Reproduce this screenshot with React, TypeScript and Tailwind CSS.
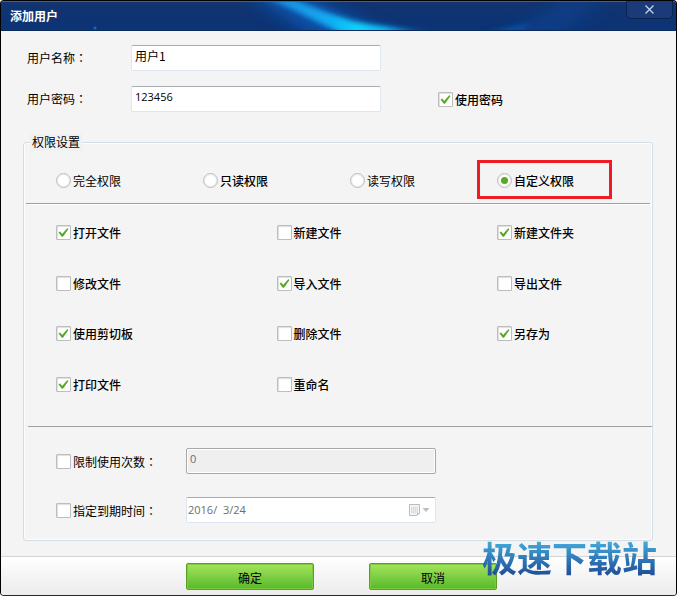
import { useState } from "react";
import type { ReactNode } from "react";

function Colon() {
  return <span className="font-['Noto_Sans_CJK_TC',sans-serif]">：</span>;
}

function CheckBox({
  label,
  checked = false,
  bold = true,
}: {
  label: ReactNode;
  checked?: boolean;
  bold?: boolean;
}) {
  return (
    <label className={"flex items-center gap-[2px] " + (bold ? "font-medium" : "")}>
      <span className="relative block size-[15px] shrink-0">
        <input
          type="checkbox"
          defaultChecked={checked}
          className="peer block size-[15px] appearance-none rounded-[1px] border border-[#bdbdbd] bg-white shadow-[inset_1px_1px_1px_#dedede]"
        />
        <svg
          viewBox="0 0 15 15"
          className="pointer-events-none absolute inset-0 hidden size-[15px] peer-checked:block"
        >
          <path
            d="M2.8 7.6 L4.2 6.8 L6.2 9.2 L11.2 3.4 L12.2 4 L7 11.4 L5.8 11.4 Z"
            fill="#52a51c"
            stroke="#52a51c"
            strokeWidth="0.4"
            strokeLinejoin="round"
          />
        </svg>
      </span>
      <span className="leading-[15px] whitespace-nowrap">{label}</span>
    </label>
  );
}

function RadioOption({
  label,
  value,
  current,
  onPick,
  bold = false,
  marked = false,
}: {
  label: string;
  value: string;
  current: string;
  onPick: (v: string) => void;
  bold?: boolean;
  marked?: boolean;
}) {
  return (
    <label className={"relative flex items-center gap-[2px] " + (bold ? "font-medium" : "")}>
      <span className="relative block size-[15px] shrink-0">
        <input
          type="radio"
          name="permission"
          value={value}
          checked={current === value}
          onChange={() => onPick(value)}
          className="peer block size-[15px] appearance-none rounded-full border border-[#bdbdbd] bg-white shadow-[inset_0_0_2px_#c8c8c8]"
        />
        <span className="pointer-events-none absolute inset-[4px] hidden rounded-full bg-[#56ab20] peer-checked:block" />
      </span>
      <span className="leading-[15px] whitespace-nowrap">{label}</span>
      {marked && (
        <span className="pointer-events-none absolute -top-[13px] -left-[20px] h-[39px] w-[135px] border-[3px] border-[#ee1c25]" />
      )}
    </label>
  );
}

function TitleBar() {
  return (
    <header className="relative flex h-[30px] items-center justify-between overflow-hidden border-b border-[#0a2a5c] bg-[#10316f]">
      <svg
        viewBox="0 0 675 30"
        preserveAspectRatio="none"
        className="absolute inset-0 size-full"
      >
        <defs>
          <linearGradient id="base" x1="0" y1="0" x2="0" y2="1">
            <stop offset="0" stopColor="#13346f" />
            <stop offset="1" stopColor="#0c3375" />
          </linearGradient>
          <linearGradient id="beam" gradientUnits="userSpaceOnUse" x1="268" y1="0" x2="430" y2="0">
            <stop offset="0" stopColor="#1488dc" />
            <stop offset="0.35" stopColor="#12a8f0" />
            <stop offset="0.55" stopColor="#0cd4fc" />
            <stop offset="0.72" stopColor="#0cb4f4" />
            <stop offset="1" stopColor="#0c5cc0" stopOpacity="0.1" />
          </linearGradient>
          <filter id="soft" filterUnits="userSpaceOnUse" x="0" y="-40" width="675" height="110">
            <feGaussianBlur stdDeviation="3" />
          </filter>
          <filter id="wide" filterUnits="userSpaceOnUse" x="0" y="-60" width="675" height="150">
            <feGaussianBlur stdDeviation="14 5" />
          </filter>
        </defs>
        <rect width="675" height="30" fill="url(#base)" />
        <path d="M240 -14 L290 -14 L410 44 L320 44 Z" fill="#0a58b8" opacity="0.8" filter="url(#wide)" />
        <path
          d="M250 -10 L276 -10 C300 2 328 13 352 21 C376 26 400 28 440 31 L440 36 L350 38 C320 24 296 10 250 -10 Z"
          fill="url(#beam)"
          filter="url(#soft)"
        />
        <path d="M480 34 L530 22 L520 34 Z" fill="#1060c4" opacity="0.6" filter="url(#soft)" />
        <path d="M500 40 L570 -6 L600 -6 L560 40 Z" fill="#0c4a9c" opacity="0.5" filter="url(#wide)" />
        <circle cx="94" cy="28" r="1.6" fill="#1863c8" />
        <rect width="675" height="1" fill="#4a6391" />
      </svg>
      <h1 className="relative pl-[9px] text-[12px] font-bold text-white">添加用户</h1>
      <button
        type="button"
        aria-label="关闭"
        className="relative mr-[3px] flex h-[18px] w-[47px] items-center justify-center self-start rounded-b-[5px] border border-t-0 border-[#0a2452] bg-[#1a3b78]"
      >
        <svg viewBox="0 0 9 9" className="size-[9px]" stroke="#c8d4e8" strokeWidth="1.3">
          <path d="M0.5 0.5 L8.5 8.5 M8.5 0.5 L0.5 8.5" />
        </svg>
      </button>
    </header>
  );
}

const options: { label: string; checked: boolean }[] = [
  { label: "打开文件", checked: true },
  { label: "新建文件", checked: false },
  { label: "新建文件夹", checked: true },
  { label: "修改文件", checked: false },
  { label: "导入文件", checked: true },
  { label: "导出文件", checked: false },
  { label: "使用剪切板", checked: true },
  { label: "删除文件", checked: false },
  { label: "另存为", checked: true },
  { label: "打印文件", checked: true },
  { label: "重命名", checked: false },
];

const greenButton =
  "h-[27px] w-[128px] rounded-[2px] border border-[#5a9e24] bg-linear-to-b from-[#a4e55c] to-[#56b82a] pt-[3px] text-[12px] leading-[20px] text-black shadow-[inset_0_0_0_1px_#7ccb3e]";

export default function App() {
  const [mode, setMode] = useState("custom");

  return (
    <div className="relative flex min-h-screen flex-col overflow-hidden rounded-[4px] border border-black border-b-[#10304a] bg-[#f4f4f4] font-['Noto_Sans_CJK_SC',sans-serif] text-[12px] leading-[16px] text-black">
      <TitleBar />

      <main className="flex-1 pt-[14px] pr-[23px] pl-[22px]">
        <div className="flex items-center">
          <label htmlFor="name" className="w-[108px] pl-[4px]">
            用户名称<Colon />
          </label>
          <input
            id="name"
            type="text"
            defaultValue="用户1"
            className="h-[26px] w-[250px] rounded-[2px] border border-[#dfe5ee] border-t-[#a9abb3] bg-white px-[3px] pb-[6px] text-[12px] text-black outline-none"
          />
        </div>
        <div className="mt-[15px] flex items-center">
          <label htmlFor="pass" className="w-[108px] pl-[4px]">
            用户密码<Colon />
          </label>
          <input
            id="pass"
            type="text"
            defaultValue="123456"
            className="h-[26px] w-[250px] rounded-[2px] border border-[#dfe5ee] border-t-[#a9abb3] bg-white px-[3px] pb-[6px] font-['Open_Sans',sans-serif] text-[11px] text-black outline-none"
          />
          <div className="ml-[57px]">
            <CheckBox label="使用密码" checked />
          </div>
        </div>

        <fieldset className="mt-[22px] rounded-[3px] border border-[#d3dde5] shadow-[inset_0_0_0_1px_#fdfdfd]">
          <legend className="ml-[6px] h-[17px] bg-[#f0f0f0] px-[2px]">权限设置</legend>

          <div className="mx-[2px] grid grid-cols-[1fr_1fr_1fr_153px] border-b border-[#a0a0a0] pt-[22px] pb-[15px] pl-[30px]">
            <RadioOption label="完全权限" value="full" current={mode} onPick={setMode} />
            <RadioOption label="只读权限" value="read" current={mode} onPick={setMode} bold />
            <RadioOption label="读写权限" value="write" current={mode} onPick={setMode} />
            <RadioOption label="自定义权限" value="custom" current={mode} onPick={setMode} bold marked />
          </div>

          <div className="ml-[4px] border-t border-b border-t-white border-b-[#a0a0a0] pt-[20px] pb-[34px] pl-[28px]">
            <div className="grid h-[167px] grid-cols-[1fr_1fr_155px] content-between">
              {options.map((o) => (
                <CheckBox key={o.label} label={o.label} checked={o.checked} />
              ))}
            </div>
          </div>

          <div className="pt-[21px] pb-[17px] pl-[32px]">
            <div className="flex items-center">
              <div className="w-[130px]">
                <CheckBox bold={false} label={<>限制使用次数<Colon /></>} />
              </div>
              <input
                type="text"
                aria-label="限制使用次数"
                disabled
                defaultValue="0"
                className="h-[26px] w-[250px] rounded-[2px] border border-[#a8a8a8] bg-[#efefef] px-[3px] pb-[6px] font-['Open_Sans',sans-serif] text-[11px] text-[#6d6d6d] shadow-[inset_0_0_0_1px_#fff]"
              />
            </div>
            <div className="mt-[23px] flex items-center">
              <div className="w-[130px]">
                <CheckBox bold={false} label={<>指定到期时间<Colon /></>} />
              </div>
              <div className="flex h-[26px] w-[250px] items-center rounded-[2px] border border-[#dfe5ee] border-t-[#a9abb3] bg-white pr-[5px]">
                <input
                  type="text"
                  aria-label="指定到期时间"
                  disabled
                  defaultValue="2016/  3/24"
                  className="min-w-0 flex-1 pl-px font-['Open_Sans',sans-serif] text-[11px] text-[#6d6d6d]"
                />
                <button type="button" aria-label="选择日期" disabled className="block">
                  <svg viewBox="0 0 22 14" className="h-[14px] w-[22px]">
                    <path d="M1.5 1.5 H11.5 V10 L9 12.5 H1.5 Z" fill="#f6f7f9" stroke="#b8bbc0" />
                    <path d="M11.5 10 H9 V12.5 Z" fill="#b8bbc0" />
                    <path
                      d="M3.5 4 H9.5 V10 H3.5 Z M5.5 4 V10 M7.5 4 V10 M3.5 6 H9.5 M3.5 8 H9.5"
                      fill="none"
                      stroke="#ccd0da"
                      strokeWidth="0.6"
                    />
                    <path d="M14.5 5 H21.5 L18 9 Z" fill="#bdbdbd" />
                  </svg>
                </button>
              </div>
            </div>
          </div>
        </fieldset>
      </main>

      <footer className="flex gap-[55px] border-t border-[#d4d4d4] bg-linear-to-b from-white to-[#ebebeb] pt-[6px] pb-[5px] pl-[185px]">
        <button type="button" className={greenButton}>
          确定
        </button>
        <button type="button" className={greenButton}>
          取消
        </button>
      </footer>

      <div className="pointer-events-none absolute right-[19px] bottom-[16px] bg-linear-to-b from-[#4cbbe8] to-[#1d4590] bg-clip-text text-[35px] leading-[44px] font-bold text-transparent">
        极速下载站
      </div>
    </div>
  );
}
